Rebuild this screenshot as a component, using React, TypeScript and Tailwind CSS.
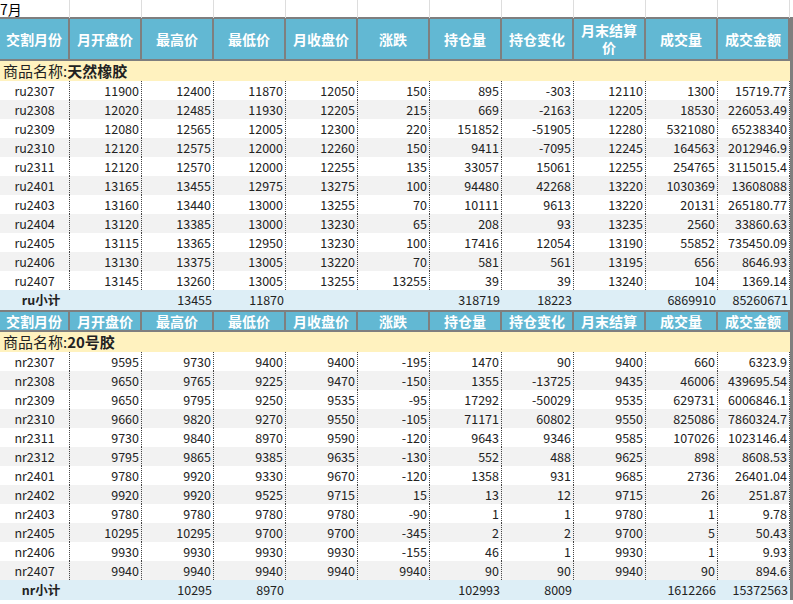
const H1 = ["交割月份","月开盘价","最高价","最低价","月收盘价","涨跌","持仓量","持仓变化","月末结算价","成交量","成交金额"];
const H2 = ["交割月份","月开盘价","最高价","最低价","月收盘价","涨跌","持仓量","持仓变化","月末结算","成交量","成交金额"];
const ru = [
["ru2307","11900","12400","11870","12050","150","895","-303","12110","1300","15719.77"],
["ru2308","12020","12485","11930","12205","215","669","-2163","12205","18530","226053.49"],
["ru2309","12080","12565","12005","12300","220","151852","-51905","12280","5321080","65238340"],
["ru2310","12120","12575","12000","12260","150","9411","-7095","12245","164563","2012946.9"],
["ru2311","12120","12570","12000","12255","135","33057","15061","12255","254765","3115015.4"],
["ru2401","13165","13455","12975","13275","100","94480","42268","13220","1030369","13608088"],
["ru2403","13160","13440","13000","13255","70","10111","9613","13220","20131","265180.77"],
["ru2404","13120","13385","13000","13230","65","208","93","13235","2560","33860.63"],
["ru2405","13115","13365","12950","13230","100","17416","12054","13190","55852","735450.09"],
["ru2406","13130","13375","13005","13220","70","581","561","13195","656","8646.93"],
["ru2407","13145","13260","13005","13255","13255","39","39","13240","104","1369.14"],
];
const nr = [
["nr2307","9595","9730","9400","9400","-195","1470","90","9400","660","6323.9"],
["nr2308","9650","9765","9225","9470","-150","1355","-13725","9435","46006","439695.54"],
["nr2309","9650","9795","9250","9535","-95","17292","-50029","9535","629731","6006846.1"],
["nr2310","9660","9820","9270","9550","-105","71171","60802","9550","825086","7860324.7"],
["nr2311","9730","9840","8970","9590","-120","9643","9346","9585","107026","1023146.4"],
["nr2312","9795","9865","9385","9635","-130","552","488","9625","898","8608.53"],
["nr2401","9780","9920","9330","9670","-120","1358","931","9685","2736","26401.04"],
["nr2402","9920","9920","9525","9715","15","13","12","9715","26","251.87"],
["nr2403","9780","9780","9780","9780","-90","1","1","9780","1","9.78"],
["nr2405","10295","10295","9700","9700","-345","2","2","9700","5","50.43"],
["nr2406","9930","9930","9930","9930","-155","46","1","9930","1","9.93"],
["nr2407","9940","9940","9940","9940","9940","90","90","9940","90","894.6"],
];
const cols = "grid grid-cols-[70px_repeat(10,72px)_3px]";

function Header({ h, tall }: { h: string[]; tall?: boolean }) {
  return (
    <div className={`${cols} bg-[#62b8d3] border-y-2 border-[#7f7f7f]`}>
      {h.map((t, i) => (
        <div key={i} className={`${tall ? "h-[40px]" : "h-[18px]"} flex items-center justify-center text-center text-white font-bold text-[14px] leading-[17px] border-r-2 border-[#7f7f7f] px-1`}>{t}</div>
      ))}
      <div className="bg-[#7f7f7f]" />
    </div>
  );
}
function Rows({ d }: { d: string[][] }) {
  return <>{d.map((r, i) => (
    <div key={i} className={`${cols} h-[19px] ${i % 2 ? "bg-[#f2f2f2]" : "bg-white"}`}>
      {r.map((c, j) => (
        <div key={j} className={`${j === 0 ? "text-center" : "text-right pr-[2px]"} text-[12.5px] leading-[19px] text-[#222] border-r border-dotted border-[#444]`}>{c}</div>
      ))}
      <div className="bg-[#7f7f7f]" />
    </div>
  ))}</>;
}
function Sub({ v }: { v: string[] }) {
  return (
    <div className={`${cols} h-[20px] bg-[#ddeef6]`}>
      {v.map((c, j) => (
        <div key={j} className={`${j === 0 ? "text-center font-bold pl-3" : "text-right pr-[2px]"} text-[12.5px] leading-[20px] text-[#222]`}>{c}</div>
      ))}
      <div className="bg-[#7f7f7f]" />
    </div>
  );
}
function Prod({ t }: { t: string }) {
  return (
    <div className="flex h-[20px] bg-[#fff2bf] text-[15px] leading-[20px] text-[#222] pl-[3px]">
      商品名称:<b>{t}</b>
      <div className="ml-auto w-[3px] bg-[#7f7f7f]" />
    </div>
  );
}
export default function App() {
  return (
    <div className="w-[793px] h-[604px] overflow-hidden bg-white" style={{ fontFamily: '"Noto Sans CJK SC", sans-serif' }}>
      <div className={`${cols} h-[17px]`}>
        <div className="text-[14px] leading-[18px] border-r border-[#ddd]">7月</div>
        {Array.from({ length: 10 }).map((_, i) => <div key={i} className="border-r border-[#ddd]" />)}
      </div>
      <Header h={H1} tall />
      <Prod t="天然橡胶" />
      <Rows d={ru} />
      <Sub v={["ru小计","","13455","11870","","","318719","18223","","6869910","85260671"]} />
      <Header h={H2} />
      <Prod t="20号胶" />
      <Rows d={nr} />
      <Sub v={["nr小计","","10295","8970","","","102993","8009","","1612266","15372563"]} />
    </div>
  );
}
